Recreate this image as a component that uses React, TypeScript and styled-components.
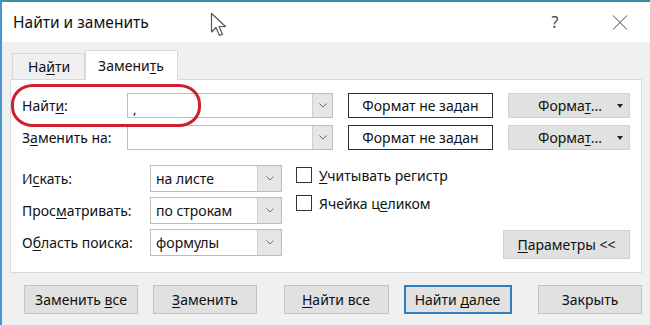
import React from "react";
import styled, { createGlobalStyle } from "styled-components";

const GlobalStyle = createGlobalStyle`
  html, body {
    margin: 0;
    padding: 0;
    background: #f0f0f0;
  }
  body {
    font-family: "Noto Sans", "Open Sans", sans-serif;
    color: #111;
  }
  * {
    box-sizing: border-box;
  }
`;

const Chevron = () => (
  <svg width="8" height="5" viewBox="0 0 8 5">
    <path d="M0.5 0.5 L4 4 L7.5 0.5" fill="none" stroke="#6d6d6d" strokeWidth="1" />
  </svg>
);

const Pointer = () => (
  <svg width="20" height="26" viewBox="0 0 20 26">
    <path
      d="M1.5 1.5 L1.5 20 L6 15.5 L9.5 23.5 L12.5 22.2 L9 14.5 L15.5 14.5 Z"
      fill="#fff"
      stroke="#555"
      strokeWidth="1.2"
      strokeLinejoin="round"
    />
  </svg>
);

const App = () => {
  return (
    <>
      <GlobalStyle />
      <Window>
        <TitleBar>
          <Title>Найти и заменить</Title>
          <TitleActions>
            <HelpButton>?</HelpButton>
            <CloseButton>
              <svg width="16" height="15" viewBox="0 0 16 15">
                <path d="M1 0.5 L15 14.5 M15 0.5 L1 14.5" stroke="#444" strokeWidth="1" />
              </svg>
            </CloseButton>
          </TitleActions>
        </TitleBar>

        <Body>
          <TabStrip>
            <Tab>
              На<Key>й</Key>ти
            </Tab>
            <Tab $active>
              Замени<Key>т</Key>ь
            </Tab>
          </TabStrip>

          <Panel>
            <FieldGrid>
              <Label>
                Найт<Key>и</Key>:
              </Label>
              <Combo>
                <ComboValue>,</ComboValue>
                <DropButton>
                  <Chevron />
                </DropButton>
              </Combo>
              <FormatBox>Формат не задан</FormatBox>
              <FormatButton>
                <span>
                  Форма<Key>т</Key>...
                </span>
                <Caret />
              </FormatButton>

              <Label>
                <span>
                  З<Key>а</Key>менить на:
                </span>
              </Label>
              <Combo>
                <ComboValue />
                <DropButton>
                  <Chevron />
                </DropButton>
              </Combo>
              <FormatBox>Формат не задан</FormatBox>
              <FormatButton>
                <span>
                  Форма<Key>т</Key>...
                </span>
                <Caret />
              </FormatButton>
            </FieldGrid>

            <Options>
              <SelectGrid>
                <Label>
                  И<Key>с</Key>кать:
                </Label>
                <Select>
                  <SelectValue>на листе</SelectValue>
                  <DropButton $wide>
                    <Chevron />
                  </DropButton>
                </Select>
                <Label>
                  Прос<Key>м</Key>атривать:
                </Label>
                <Select>
                  <SelectValue>по строкам</SelectValue>
                  <DropButton $wide>
                    <Chevron />
                  </DropButton>
                </Select>
                <Label>
                  <span>
                    О<Key>б</Key>ласть поиска:
                  </span>
                </Label>
                <Select>
                  <SelectValue>формулы</SelectValue>
                  <DropButton $wide>
                    <Chevron />
                  </DropButton>
                </Select>
              </SelectGrid>

              <RightColumn>
                <CheckRow>
                  <CheckBox />
                  <span>
                    <Key>У</Key>читывать регистр
                  </span>
                </CheckRow>
                <CheckRow>
                  <CheckBox />
                  <span>
                    Ячейка ц<Key>е</Key>ликом
                  </span>
                </CheckRow>
                <ParamsButton>
                  <span>
                    <Key>П</Key>араметры &lt;&lt;
                  </span>
                </ParamsButton>
              </RightColumn>
            </Options>
          </Panel>

          <Footer>
            <ButtonGroup>
              <DialogButton $width={114}>
                <span>
                  Заменить <Key>в</Key>се
                </span>
              </DialogButton>
              <DialogButton $width={104}>
                <span>
                  <Key>З</Key>аменить
                </span>
              </DialogButton>
            </ButtonGroup>
            <ButtonGroup>
              <DialogButton $width={105}>
                <span>
                  <Key>Н</Key>айти все
                </span>
              </DialogButton>
              <DialogButton $width={108} $primary>
                <span>
                  Найти <Key>д</Key>алее
                </span>
              </DialogButton>
            </ButtonGroup>
            <DialogButton $width={104}>Закрыть</DialogButton>
          </Footer>
        </Body>

        <Highlight />
        <CursorMark>
          <Pointer />
        </CursorMark>
      </Window>
    </>
  );
};

// --- Styled Components ---

const Window = styled.div`
  position: relative;
  width: 650px;
  height: 325px;
  overflow: hidden;
  background: #f0f0f0;
  border-top: 2px solid #3f8ea6;
  border-left: 2px solid #4b95cf;
  font-size: 14px;
`;

const TitleBar = styled.div`
  height: 40px;
  background: #fff;
  display: flex;
  align-items: center;
  padding-left: 11px;
`;

const Title = styled.div`
  font-size: 15.5px;
  color: #111;
`;

const TitleActions = styled.div`
  margin-left: auto;
  display: flex;
  align-items: center;
  gap: 27px;
  padding-right: 7px;
`;

const HelpButton = styled.div`
  width: 30px;
  text-align: center;
  font-size: 16px;
  color: #444;
`;

const CloseButton = styled.div`
  width: 46px;
  display: flex;
  justify-content: center;
`;

const Body = styled.div`
  padding: 0 8px 0 8px;
`;

const TabStrip = styled.div`
  height: 37px;
  display: flex;
  align-items: flex-end;
  padding-left: 2px;
`;

const Tab = styled.div<{ $active?: boolean }>`
  position: relative;
  height: ${(p) => (p.$active ? "30px" : "26px")};
  display: flex;
  align-items: center;
  padding: ${(p) => (p.$active ? "0 13px 0 12px" : "0 14px 0 15px")};
  background: ${(p) => (p.$active ? "#fff" : "#f0f0f0")};
  border: 1px solid #d9d9d9;
  border-bottom: none;
  margin-bottom: ${(p) => (p.$active ? "-1px" : "0")};
  z-index: ${(p) => (p.$active ? 1 : 0)};
  color: #111;
`;

const Key = styled.span`
  text-decoration: underline;
  text-underline-offset: 2px;
`;

const Panel = styled.div`
  height: 194px;
  background: #fff;
  border: 1px solid #d9d9d9;
  padding: 13px 11px 0 11px;
`;

const FieldGrid = styled.div`
  display: grid;
  grid-template-columns: 90px 206px 145px 122px;
  grid-auto-rows: 25px;
  column-gap: 15px;
  row-gap: 7px;
`;

const Label = styled.div`
  display: flex;
  align-items: center;
  white-space: nowrap;
  color: #111;
`;

const Combo = styled.div`
  display: flex;
  border: 1px solid #bcbcbc;
  background: #fff;
`;

const ComboValue = styled.div`
  flex: 1;
  padding: 9px 0 0 5px;
  font-size: 13px;
  line-height: 1;
`;

const DropButton = styled.div<{ $wide?: boolean }>`
  width: ${(p) => (p.$wide ? "24px" : "20px")};
  display: flex;
  align-items: center;
  justify-content: center;
  background: #e6e6e6;
  border-left: 1px solid #cfcfcf;
`;

const FormatBox = styled.div`
  display: flex;
  align-items: center;
  justify-content: center;
  border: 1px solid #2f2f2f;
  background: #fff;
`;

const FormatButton = styled.div`
  display: flex;
  align-items: center;
  justify-content: space-between;
  padding: 0 6px 0 29px;
  background: #e1e1e1;
  border: 1px solid #d3d3d3;
`;

const Caret = styled.span`
  width: 0;
  height: 0;
  border-left: 3.5px solid transparent;
  border-right: 3.5px solid transparent;
  border-top: 4px solid #222;
`;

const Options = styled.div`
  display: flex;
  margin-top: 15px;
`;

const SelectGrid = styled.div`
  display: grid;
  grid-template-columns: 128px 132px;
  grid-auto-rows: 27px;
  row-gap: 5px;
`;

const Select = styled.div`
  display: flex;
  border: 1px solid #bcbcbc;
  background: #fff;
`;

const SelectValue = styled.div`
  flex: 1;
  display: flex;
  align-items: center;
  padding-left: 5px;
`;

const RightColumn = styled.div`
  flex: 1;
  display: flex;
  flex-direction: column;
  margin-left: 14px;
  gap: 8px;
`;

const CheckRow = styled.div`
  height: 20px;
  display: flex;
  align-items: center;
  gap: 7px;
`;

const CheckBox = styled.span`
  width: 16px;
  height: 16px;
  border: 1px solid #333;
  background: #fff;
`;

const ParamsButton = styled.div`
  align-self: flex-end;
  margin-top: auto;
  margin-bottom: -3px;
  width: 127px;
  height: 29px;
  display: flex;
  align-items: center;
  justify-content: center;
  background: #e1e1e1;
  border: 1px solid #d0d0d0;
`;

const Footer = styled.div`
  display: flex;
  justify-content: space-between;
  padding: 12px 0 0 14px;
`;

const ButtonGroup = styled.div`
  display: flex;
  gap: 15px;
`;

const DialogButton = styled.div<{ $width: number; $primary?: boolean }>`
  width: ${(p) => p.$width}px;
  height: 29px;
  display: flex;
  align-items: center;
  justify-content: center;
  background: #e1e1e1;
  border: ${(p) => (p.$primary ? "2px solid #2f7fc0" : "1px solid #c4c4c4")};
  color: #111;
`;

const Highlight = styled.div`
  position: absolute;
  left: 9px;
  top: 82px;
  width: 190px;
  height: 43px;
  border: 3px solid #cf1f2e;
  border-radius: 22px / 20px;
  pointer-events: none;
`;

const CursorMark = styled.div`
  position: absolute;
  left: 208px;
  top: 10px;
  line-height: 0;
`;

export default App;
